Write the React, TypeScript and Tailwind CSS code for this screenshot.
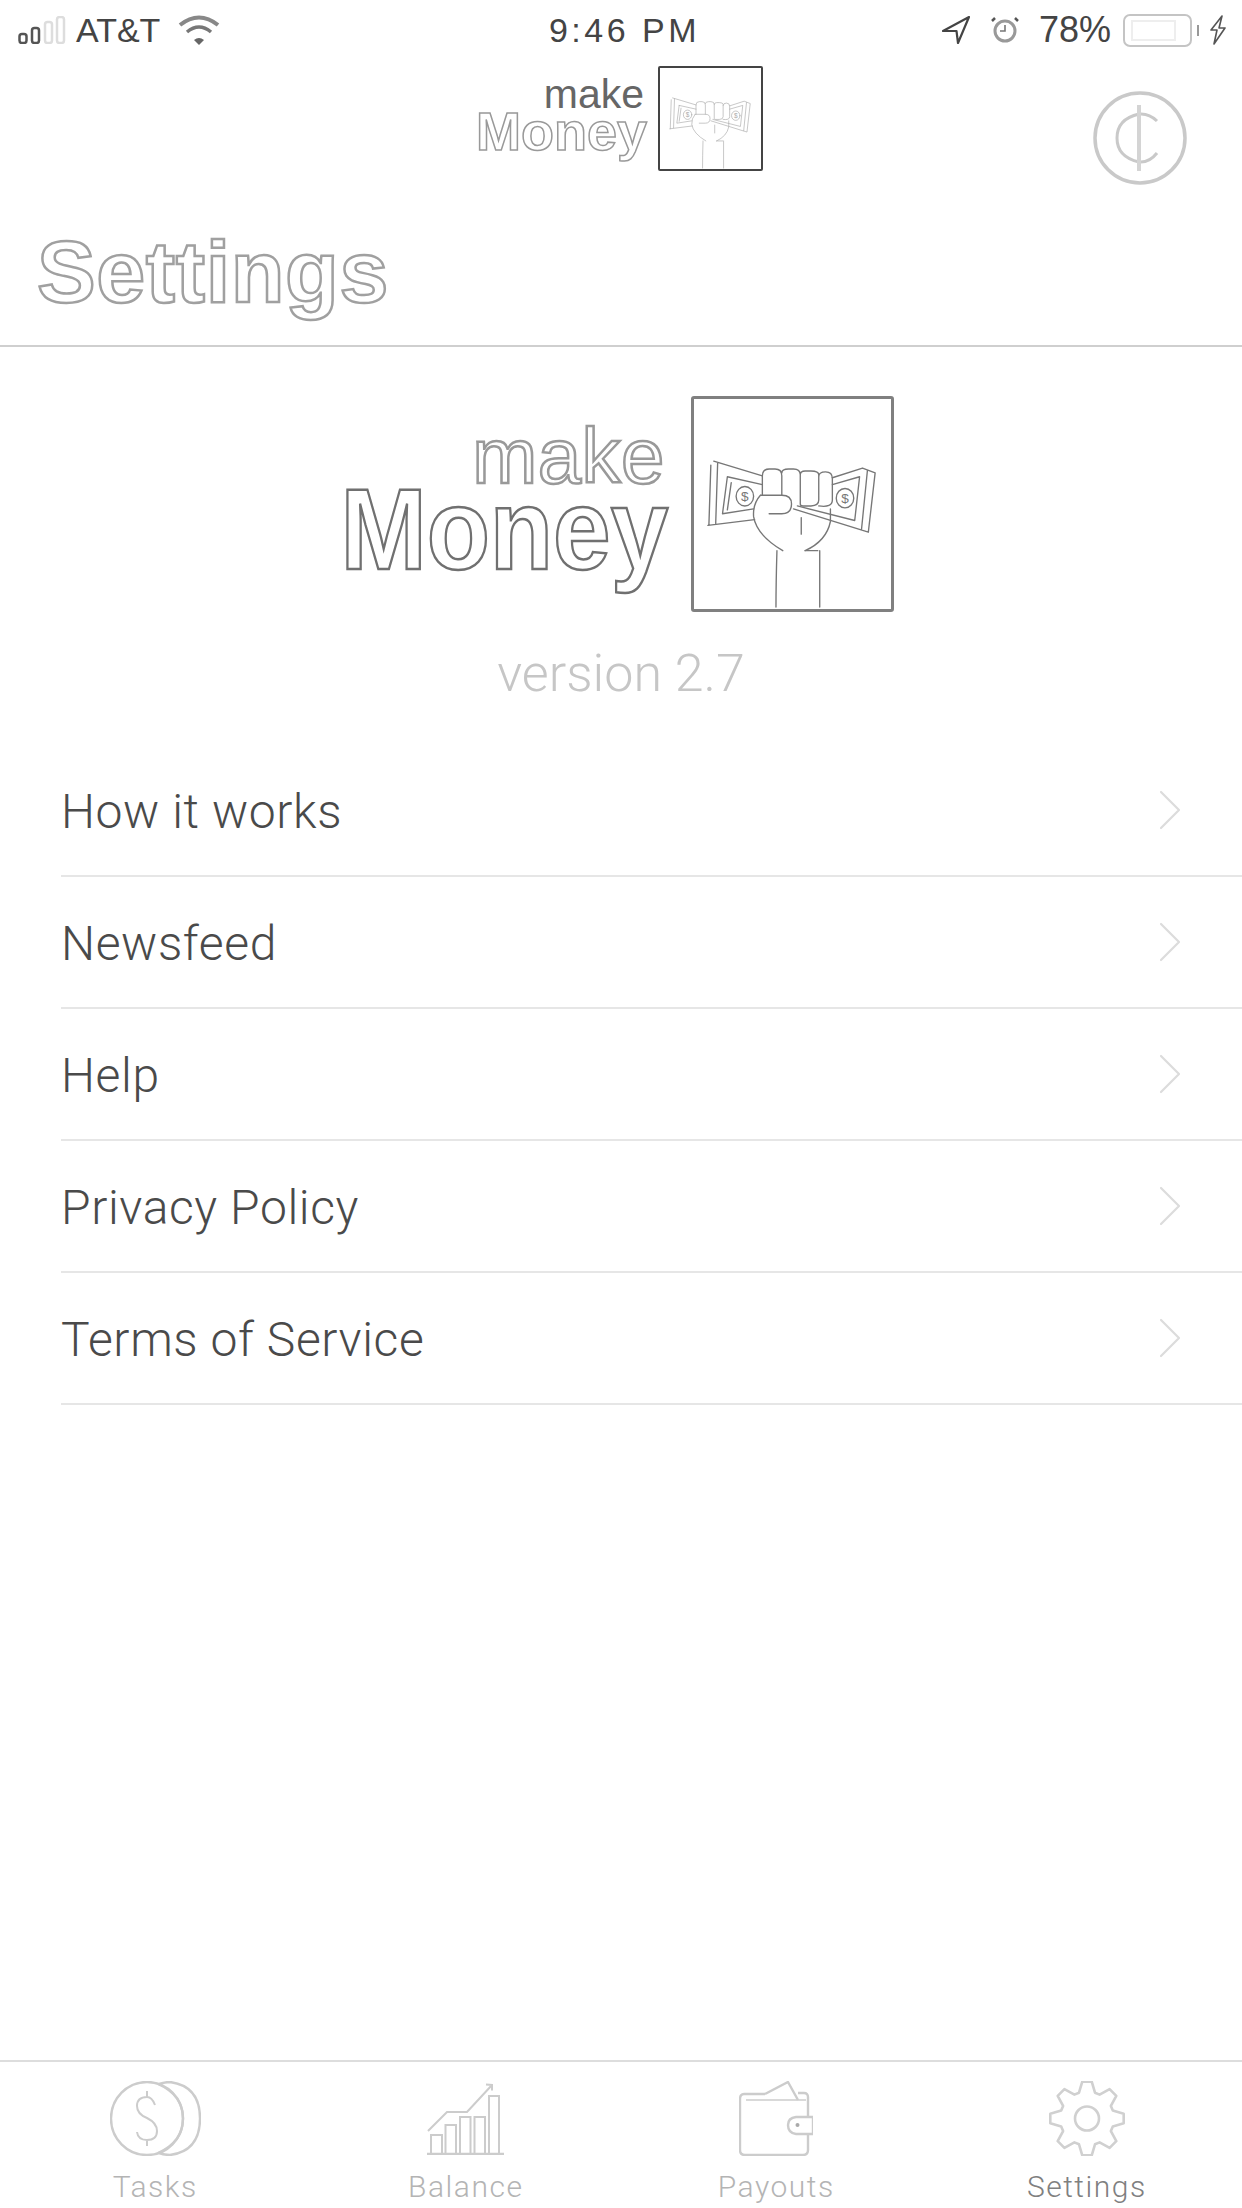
const menuItems = ['How it works', 'Newsfeed', 'Help', 'Privacy Policy', 'Terms of Service'];

function FistLogo({ className }: { className?: string }) {
  return (
    <svg viewBox="0 0 202 216" fill="none" stroke="currentColor" strokeWidth="1.4" strokeLinecap="round" strokeLinejoin="round" className={className}>
      <path d="M20 64L70 79M17 68L15 130M14 130L62 124M24 66L22 128" />
      <path d="M34 80L70 88M34 80L29 118L61 113M38 86L34 114" />
      <ellipse cx="52" cy="100" rx="9" ry="10" />
      <text x="52" y="105" fontSize="14" textAnchor="middle" stroke="none" fill="currentColor" fontFamily="Liberation Sans, sans-serif">$</text>
      <path d="M142 81L173 71L186 76L179 137L102 113M178 74L172 134M142 88L170 80L165 125L106 110" />
      <ellipse cx="155" cy="102" rx="9" ry="10" />
      <text x="155" y="107" fontSize="14" textAnchor="middle" stroke="none" fill="currentColor" fontFamily="Liberation Sans, sans-serif">$</text>
      <path d="M70 99V79Q70 72 77 72H83Q90 72 90 79V99M90 76Q90 72 97 72H102Q109 72 109 78V108Q109 110 112 110H120Q128 110 128 104V78Q128 74 120 74H114Q109 74 109 78M128 80Q128 75 135 75Q142 75 142 82V104Q142 112 128 110" />
      <path d="M68 99H90Q100 99 100 108Q100 118 90 118H77M68 99Q60 108 61 121Q64 140 91 156M140 113V126Q136 146 114 156" />
      <path d="M110 122V139M114 156H127M85 156Q84 190 84 214M129 156V214" />
    </svg>
  );
}

function BrandLogo() {
  return (
    <div className="flex items-start justify-center">
      <div className="flex w-[320px] flex-col items-end pt-[25px] font-['Liberation_Sans',sans-serif]">
        <span className="mr-[3px] text-[78px] leading-[70px] tracking-[0.5px] text-white [-webkit-text-stroke:2.5px_#999999]">make</span>
        <span className="origin-right scale-x-[0.9] text-[115px] leading-[77px] font-bold text-white [-webkit-text-stroke:2.5px_#707070]">Money</span>
      </div>
      <div className="ml-[23px] h-[216px] w-[203px] rounded-[3px] border-[3px] border-[#808080] text-[#777777]">
        <FistLogo className="h-full w-full" />
      </div>
    </div>
  );
}

function SmallLogo() {
  return (
    <div className="ml-[-3px] flex items-start">
      <div className="flex w-[171px] flex-col items-end pt-[13px] font-['Liberation_Sans',sans-serif]">
        <span className="mr-[3px] text-[41px] leading-[30px] text-[#666666]">make</span>
        <span className="text-[54px] leading-[44px] font-bold text-white [-webkit-text-stroke:1.5px_#999999]">Money</span>
      </div>
      <div className="ml-[11px] h-[105px] w-[105px] rounded-[2px] border-2 border-[#444444] text-[#aaaaaa]">
        <FistLogo className="h-full w-full" />
      </div>
    </div>
  );
}

function StatusBar() {
  return (
    <div className="grid h-[60px] grid-cols-[1fr_auto_1fr] items-center font-['Liberation_Sans',sans-serif] text-[34px] text-[#444444]">
      <div className="flex items-center pl-[18px]">
        <svg viewBox="0 0 48 28" width="48" height="28" fill="none" strokeWidth="2.5">
          <rect x="1.5" y="18" width="7" height="9" rx="2.5" stroke="#555555" />
          <rect x="14" y="12" width="7" height="15" rx="2.5" stroke="#555555" />
          <rect x="27" y="6" width="7" height="21" rx="2.5" stroke="#dddddd" />
          <rect x="39" y="1" width="7" height="26" rx="2.5" stroke="#dddddd" />
        </svg>
        <span className="ml-[10px] leading-none">AT&amp;T</span>
        <svg viewBox="0 0 42 30" width="42" height="30" fill="none" className="ml-[18px]">
          <path d="M2 10Q21 -5 40 10" stroke="#888888" strokeWidth="4" />
          <path d="M9 17Q21 7 33 17" stroke="#777777" strokeWidth="3.5" />
          <path d="M16 25L21 30L26 25Q21 21 16 25Z" fill="#666666" />
        </svg>
      </div>
      <span className="ml-[7px] tracking-[3.5px]">9:46 PM</span>
      <div className="flex items-center justify-end pr-[15px]">
        <svg viewBox="0 0 28 28" width="28" height="28" fill="none" stroke="#444444" strokeWidth="2.2" strokeLinejoin="round">
          <path d="M1 15L27 1L16 27L14.5 15Z" />
        </svg>
        <svg viewBox="0 0 28 28" width="28" height="28" fill="none" className="ml-[21px]">
          <circle cx="14" cy="15" r="10" stroke="#999999" strokeWidth="3" />
          <path d="M14 9V15H9" stroke="#777777" strokeWidth="1.6" />
          <path d="M1 5L4 2M27 5L24 2" stroke="#555555" strokeWidth="2.5" />
        </svg>
        <span className="ml-[20px] text-[36px] leading-none">78%</span>
        <div className="ml-3 flex h-[33px] w-[69px] items-center rounded-[7px] border-2 border-[#c4c4c4] pl-[6px]">
          <div className="h-[21px] w-[45px] border-2 border-[#eeeeee]" />
        </div>
        <div className="ml-[5px] h-[11px] w-[2px] bg-[#999999]" />
        <svg viewBox="0 0 18 30" width="18" height="30" fill="none" stroke="#555555" strokeWidth="1.6" strokeLinejoin="round" className="ml-[10px]">
          <path d="M13 1L2 15H8L5 29L16 13H10Z" />
        </svg>
      </div>
    </div>
  );
}

function CoinButton() {
  return (
    <svg viewBox="0 0 94 94" width="94" height="94" fill="none" stroke="#c9c9c9">
      <circle cx="47" cy="47" r="45" strokeWidth="3.5" />
      <path d="M64 30Q56 22 46 23Q24 28 24 47Q24 66 46 71Q56 72 64 62" strokeWidth="3" />
      <path d="M46 14V80" strokeWidth="4" stroke="#d4d4d4" />
    </svg>
  );
}

function CoinsIcon() {
  return (
    <svg viewBox="0 0 91 75" width="91" height="75" fill="none" stroke="#cccccc" strokeWidth="2.4">
      <ellipse cx="37" cy="37.5" rx="36" ry="36.5" />
      <path d="M49 3Q55 1 60 1Q90 5 90 37.5Q90 70 60 74Q55 74 49 72" />
      <path d="M48 3Q73 14 73 37.5Q73 61 48 72" />
      <path d="M45 24Q42 16 37 16Q27 16 27 25Q27 33 37 37Q47 42 47 50Q47 59 37 59Q28 59 27 51M37 10V16M37 59V65" strokeWidth="2" />
    </svg>
  );
}

function BalanceIcon() {
  return (
    <svg viewBox="0 0 77 72" width="77" height="72" fill="none" stroke="#cccccc" strokeWidth="2">
      <path d="M0 71H77" strokeWidth="2.4" />
      <path d="M4 71V52H15V71M18.5 71V42H29V71M33 71V34H43.5V71M47.5 71V34H58V71M62 71V13H72V71" />
      <path d="M1 48L20 29H40L65 2M59 1.5L65 2L65 7.5" />
    </svg>
  );
}

function WalletIcon() {
  return (
    <svg viewBox="0 0 74 75" width="74" height="75" fill="none" stroke="#cccccc" strokeWidth="2.4" strokeLinejoin="round">
      <path d="M69 36V16Q69 12 65 12H59M26 13H5Q1 13 1 18V69Q1 74 6 74H64Q69 74 69 69V53" />
      <path d="M7 19H67" strokeWidth="1.6" />
      <path d="M26 13L49 1L59 19" />
      <path d="M74 36H57Q49 37 49 44Q49 52 57 53H74Z" />
      <circle cx="58.5" cy="44" r="2" fill="#aaaaaa" stroke="none" />
    </svg>
  );
}

function gearPath() {
  const cx = 38;
  const cy = 37.5;
  const points: string[] = [];
  for (let i = 0; i < 8; i++) {
    const a = (i * Math.PI) / 4 - Math.PI / 2;
    const offsets: [number, number][] = [[-0.3, 27], [-0.13, 37], [0.13, 37], [0.3, 27]];
    offsets.forEach(([da, r]) => {
      points.push(`${(cx + r * Math.cos(a + da)).toFixed(1)} ${(cy + r * Math.sin(a + da)).toFixed(1)}`);
    });
  }
  return `M${points.join('L')}Z`;
}

function GearIcon() {
  return (
    <svg viewBox="0 0 76 75" width="76" height="75" fill="none" stroke="#d0d0d0" strokeWidth="2.6" strokeLinejoin="round">
      <path d={gearPath()} />
      <circle cx="38" cy="37.5" r="12" />
    </svg>
  );
}

const tabs = [
  { label: 'Tasks', icon: <CoinsIcon />, labelClass: 'text-[#b4b4b4]' },
  { label: 'Balance', icon: <BalanceIcon />, labelClass: 'text-[#b4b4b4]' },
  { label: 'Payouts', icon: <WalletIcon />, labelClass: 'text-[#b4b4b4]' },
  { label: 'Settings', icon: <GearIcon />, labelClass: 'text-[#808080]' }
];

export default function App() {
  return (
    <div className="flex h-[2208px] w-[1242px] flex-col overflow-hidden bg-white font-['Roboto',sans-serif]">
      <StatusBar />

      <div className="h-[287px] border-b-2 border-[#cfcfcf]">
        <div className="grid grid-cols-[1fr_auto_1fr] pt-[6px]">
          <div />
          <SmallLogo />
          <div className="flex justify-end pt-[25px] pr-[55px]">
            <CoinButton />
          </div>
        </div>
        <h1 className="mt-[37px] pl-[37px] font-['Liberation_Sans',sans-serif] text-[88px] leading-[100px] font-bold tracking-[0.6px] text-white [-webkit-text-stroke:2.5px_#a0a0a0]">
          Settings
        </h1>
      </div>

      <div className="pt-[49px]">
        <BrandLogo />
      </div>

      <p className="mt-[32px] text-center text-[52px] leading-[60px] font-light text-[#c6c6c6]">version 2.7</p>

      <ul className="mt-[41px] pl-[61px]">
        {menuItems.map((item) => (
          <li key={item} className="flex h-[132px] items-center justify-between border-b-2 border-[#e6e6e6] pr-[61px]">
            <span className="pt-[4px] text-[48px] font-light tracking-[0.6px] text-[#4a4a4a]">{item}</span>
            <svg viewBox="0 0 22 40" width="22" height="40" fill="none" stroke="#dcdcdc" strokeWidth="2.2" strokeLinecap="round" strokeLinejoin="round">
              <path d="M2 2L20 20L2 38" />
            </svg>
          </li>
        ))}
      </ul>

      <nav className="mt-auto grid h-[148px] grid-cols-4 border-t-2 border-[#dddddd] pt-[19px]">
        {tabs.map((tab) => (
          <div key={tab.label} className="flex flex-col items-center">
            <div className="flex h-[75px] items-center">{tab.icon}</div>
            <span className={`mt-[13px] text-[30px] leading-[35px] font-light tracking-[1.5px] ${tab.labelClass}`}>{tab.label}</span>
          </div>
        ))}
      </nav>
    </div>
  );
}
